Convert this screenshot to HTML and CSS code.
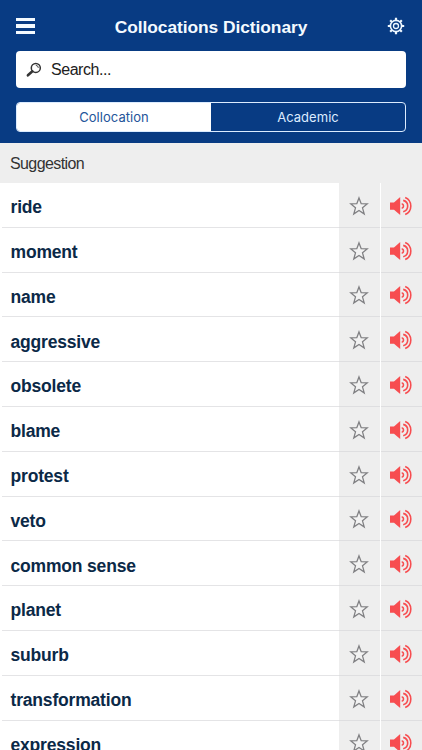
FILE: index.html
```html
<!DOCTYPE html>
<html lang="en">
<head>
<meta charset="utf-8">
<title>Collocations Dictionary</title>
<link rel="stylesheet" href="styles.css">
</head>
<body>
<svg class="sprite" aria-hidden="true">
  <symbol id="star" viewBox="0 0 20 20"><path d="M10 1.9 12.2 7.7 18.2 7.9 13.5 11.8 15.2 17.9 10 14.5 4.8 17.9 6.5 11.8 1.8 7.9 7.8 7.7Z" fill="#f2f2f2" stroke="#808083" stroke-width="1.3"/></symbol>
  <symbol id="sound" viewBox="0 0 24 20"><path d="M1 6.4H5L11.2 .9V19.1L5 13.8H1Z" fill="#f74d50"/><g fill="none" stroke="#f74d50" stroke-width="1.6"><path d="M12.7 7.8a2.3 2.3 0 0 1 0 4.5M14.2 4.4a5.8 5.8 0 0 1 0 11.3M16.2 1.4a9.4 9.4 0 0 1 0 17.2"/></g></symbol>
</svg>
<header class="header">
  <div class="bar">
    <div class="menu"><i></i><i></i><i></i></div>
    <h1>Collocations Dictionary</h1>
    <svg class="gear" viewBox="0 0 18 18" fill="none" stroke="#eef7ff"><circle cx="9" cy="9" r="5.6" stroke-width="1.6"/><circle cx="9" cy="9" r="2.5" stroke-width="1.3"/><path stroke-width="2.2" d="M9 .8v2.8M9 14.4v2.8M.8 9h2.8M14.4 9h2.8M3.2 3.2l2 2M12.8 12.8l2 2M3.2 14.8l2-2M12.8 5.2l2-2"/></svg>
  </div>
  <div class="search">
    <svg class="lens" viewBox="0 0 16 16" fill="none" stroke="#343434"><circle cx="9.8" cy="5.9" r="4.5" stroke-width="1.5"/><path d="M6.4 9.3 1.9 13.3" stroke-width="2.6" stroke-linecap="round"/><path d="M9.8 3.4a2.5 2.5 0 0 1 2.5 2.5" stroke-width=".9"/></svg>
    <span>Search...</span>
  </div>
  <div class="tabs"><div class="tab active">Collocation</div><div class="tab">Academic</div></div>
</header>
<div class="section"><span>Suggestion</span></div>
<main class="list" id="list"></main>
<script src="script.js"></script>
</body>
</html>
```
FILE: styles.css
```css
* { box-sizing: border-box; }
body { margin: 0; width: 422px; height: 750px; overflow: hidden; background: #fff; font-family: "Liberation Sans", Arial, sans-serif; }
.sprite { display: none; }
.header { height: 143px; padding: 9px 16px 0; background: #083b83; }
.bar { display: flex; align-items: center; justify-content: space-between; height: 34px; }
.menu { display: flex; flex-direction: column; gap: 3px; width: 36px; }
.menu i { width: 19px; height: 3.5px; background: #f4faff; }
h1 { margin: 1px 0 0; color: #f4faff; font-size: 17.4px; line-height: 22px; font-weight: 700; letter-spacing: -.07px; white-space: nowrap; }
.gear { width: 18px; height: 18px; margin-left: 17px; margin-right: 1px; }
.search { display: flex; align-items: center; height: 37px; margin-top: 8px; padding-left: 10px; border-radius: 4px; background: #fff; color: #202020; font-size: 16px; letter-spacing: -.45px; }
.lens { width: 16px; height: 16px; margin-right: 9px; }
.tabs { display: flex; height: 30px; margin-top: 14px; border: 1px solid #dcecff; border-radius: 4px; overflow: hidden; }
.tab { flex: 1; display: flex; align-items: center; justify-content: center; color: #dcebff; font: 13px/28px Inter, sans-serif; letter-spacing: .05px; }
.active { background: #fff; color: #24559a; }
.section { display: flex; align-items: center; height: 40px; padding: 2px 10px 0; background: #eee; color: #333; font-size: 16px; letter-spacing: -.6px; }
.row { display: grid; grid-template-columns: 337px 41px 1px 41px; height: 44.8px; padding-left: 2px; }
.word { display: flex; align-items: center; padding: 4.8px 0 0 8.5px; color: #0b2947; font-size: 17.5px; font-weight: 700; letter-spacing: -.18px; box-shadow: inset 0 -1px #e4e4e6; }
.cell { display: flex; align-items: center; justify-content: center; background: #eee; box-shadow: inset 0 -1px #dedee0; }
.cell svg { width: 20px; height: 20px; margin-top: 1px; margin-right: 1px; }
.cell:last-child { grid-column: 4; box-shadow: inset 0 -1px #dedee0, 1px 0 #eee; }
.cell:last-child svg { width: 24px; margin-right: 2px; }
```
FILE: script.js
```js
const words = ["ride", "moment", "name", "aggressive", "obsolete", "blame", "protest", "veto", "common sense", "planet", "suburb", "transformation", "expression"];
document.getElementById("list").innerHTML = words.map(word =>
  `<div class="row"><div class="word">${word}</div><div class="cell"><svg><use href="#star"/></svg></div><div class="cell"><svg><use href="#sound"/></svg></div></div>`
).join("");
```
